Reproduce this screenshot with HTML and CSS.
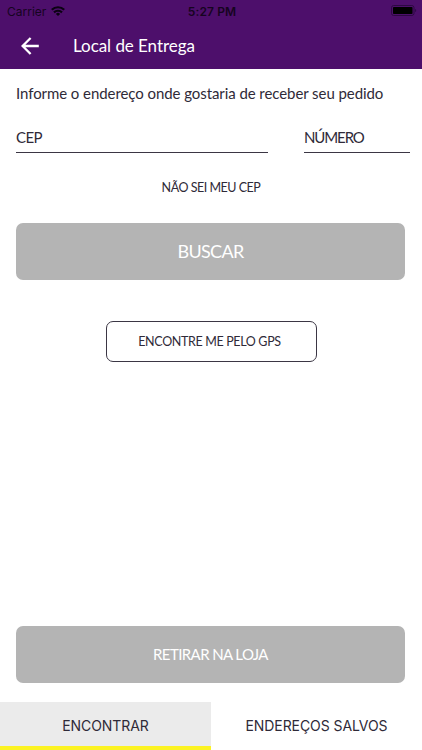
FILE: index.html
```html
<!DOCTYPE html>
<html lang="pt-BR">
<head>
  <meta charset="UTF-8">
  <meta name="viewport" content="width=device-width, initial-scale=1.0">
  <title>Local de Entrega</title>
  <link rel="stylesheet" href="styles.css">
</head>
<body>
  <header>
    <div class="status-bar">
      <div class="carrier">
        <span>Carrier</span>
        <svg width="14" height="10" viewBox="0 0 14 10" fill="none" stroke="#0b0212" stroke-width="2.2">
          <path d="M0.8 3.8a8.8 8.8 0 0 1 12.4 0M3 6.4a5.7 5.7 0 0 1 8 0"/>
          <path d="M7 10L4.9 7.9a3 3 0 0 1 4.2 0z" fill="#0b0212" stroke="none"/>
        </svg>
      </div>
      <span class="time">5:27 PM</span>
      <svg class="battery" width="26" height="12" viewBox="0 0 26 12">
        <rect x="0.5" y="0.5" width="22.5" height="10" rx="2.2" fill="none" stroke="#2c0942"/>
        <rect x="2" y="2" width="19.5" height="7" rx="0.8" fill="#000"/>
        <path d="M24.2 4v3c1.3-.5 1.3-2.5 0-3z" fill="#2c0942"/>
      </svg>
    </div>
    <div class="nav-bar">
      <svg width="18" height="18" viewBox="0 0 18 18" fill="none" stroke="#fff" stroke-width="2.3">
        <path d="M17.8 9H2M9.6 1l-8 8 8 8"/>
      </svg>
      <h1>Local de Entrega</h1>
    </div>
  </header>

  <main>
    <p class="intro">Informe o endereço onde gostaria de receber seu pedido</p>
    <div class="fields">
      <div class="field cep"><span>CEP</span></div>
      <div class="field numero"><span>NÚMERO</span></div>
    </div>
    <a class="link-cep">NÃO SEI MEU CEP</a>
    <button class="btn buscar">BUSCAR</button>
    <button class="btn-gps">ENCONTRE ME PELO GPS</button>
    <button class="btn retirar">RETIRAR NA LOJA</button>
  </main>

  <nav class="tabs">
    <a class="tab active">ENCONTRAR</a>
    <a class="tab">ENDEREÇOS SALVOS</a>
  </nav>
</body>
</html>
```
FILE: styles.css
```css
* {
  box-sizing: border-box;
}

body {
  font-family: 'Lato', sans-serif;
  margin: 0;
  height: 750px;
  background: #ffffff;
  color: #2f2a38;
  display: flex;
  flex-direction: column;
  overflow: hidden;
  white-space: nowrap;
}

svg {
  display: block;
  flex: none;
}

button {
  font-family: inherit;
  padding: 0;
}

header {
  height: 68.5px;
  background-color: #4d0f6b;
}

/* Barra de status */
.status-bar {
  height: 22px;
  padding: 0 5px 0 7px;
  display: grid;
  grid-template-columns: 1fr auto 1fr;
  align-items: center;
  font-family: 'Inter', sans-serif;
  font-size: 12px;
  color: #16041f;
}

.carrier {
  display: flex;
  align-items: center;
  gap: 5px;
}

.time {
  font-weight: 600;
  letter-spacing: 0.1px;
}

.battery {
  justify-self: end;
}

.nav-bar {
  height: 47px;
  padding-left: 21px;
  display: flex;
  align-items: center;
  gap: 34px;
}

h1 {
  margin: 0;
  font-size: 17px;
  font-weight: 400;
  line-height: 20px;
  letter-spacing: -0.05px;
  color: #ffffff;
}

main {
  flex: 1;
  padding: 14px 16px 19px;
  display: flex;
  flex-direction: column;
}

.intro {
  margin: 0;
  font-size: 15px;
  line-height: 20px;
  letter-spacing: -0.07px;
}

.fields {
  display: flex;
  justify-content: space-between;
  margin: 20px -4px 0 0;
}

.field {
  height: 30.5px;
  padding-top: 4px;
  border-bottom: 1px solid #3b3644;
  font-size: 15px;
  line-height: 20px;
  letter-spacing: -0.6px;
}

.cep {
  width: 252px;
}

.numero {
  width: 106px;
  letter-spacing: -1.1px;
}

.link-cep {
  align-self: center;
  margin-top: 25px;
  font-size: 12.5px;
  line-height: 20px;
  letter-spacing: -0.48px;
}

.btn {
  height: 57px;
  margin-right: 1px;
  border: none;
  border-radius: 7px;
  background-color: #b4b4b4;
  color: #ffffff;
}

.buscar {
  margin-top: 25px;
  padding-bottom: 1px;
  font-size: 18px;
  letter-spacing: -0.7px;
}

.btn-gps {
  align-self: center;
  width: 211px;
  height: 41px;
  margin-top: 41px;
  padding-right: 3px;
  border: 1px solid #3b3644;
  border-radius: 7px;
  background: #ffffff;
  color: #2f2a38;
  font-size: 12.5px;
  letter-spacing: -0.35px;
}

.retirar {
  margin-top: auto;
  padding-bottom: 1px;
  font-size: 15px;
  letter-spacing: -0.6px;
}

/* Abas inferiores */
.tabs {
  display: flex;
  height: 48.5px;
  font-family: 'Inter', sans-serif;
  font-size: 14px;
  letter-spacing: -0.08px;
}

.tab {
  flex: 1;
  display: flex;
  align-items: center;
  justify-content: center;
  padding-top: 3px;
  border-bottom: 4px solid transparent;
}

.active {
  background-color: #ebebeb;
  background-clip: padding-box;
  border-bottom-color: #fcf322;
}
```
